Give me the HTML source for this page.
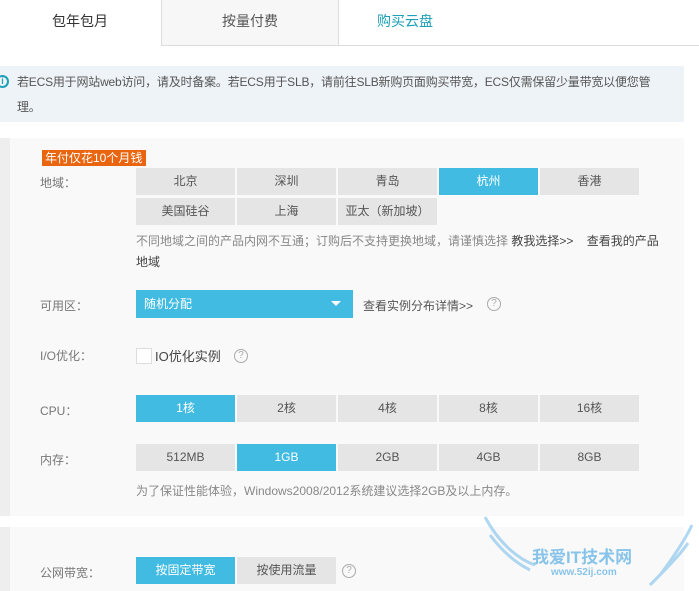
<!DOCTYPE html>
<html><head><meta charset="utf-8"><style>
*{margin:0;padding:0;box-sizing:border-box}
body{width:699px;height:591px;overflow:hidden;background:#fff;font-family:"Liberation Sans","Noto Sans CJK SC",sans-serif;font-size:12px;color:#555;position:relative}
.a{position:absolute}
.b{position:absolute;height:27px;width:99px;background:#e5e5e5;text-align:center;line-height:27px;color:#555;font-size:12px}
.s{background:#41bbe1;color:#fff}
.l{position:absolute;color:#777;font-size:12px}
.q{position:absolute;width:14px;height:14px;border:1px solid #aaa;border-radius:50%;font-size:10px;line-height:12px;text-align:center;color:#aaa}
</style></head><body>
<div class="a" style="left:0;top:0;width:160px;height:46px;line-height:42px;text-align:center;font-size:14px;color:#333">包年包月</div>
<div class="a" style="left:161px;top:0;width:178px;height:46px;background:#f7f7f7;border-left:1px solid #ddd;border-right:1px solid #ddd;border-bottom:1px solid #ddd;line-height:42px;text-align:center;font-size:14px;color:#555">按量付费</div>
<div class="a" style="left:339px;top:0;width:360px;height:46px;border-bottom:1px solid #ddd;"><div style="position:absolute;left:38px;top:0;line-height:42px;font-size:14px;color:#1fa0b8">购买云盘</div></div>

<div class="a" style="left:0;top:66px;width:684px;height:56px;background:#eef3f7"></div>
<div class="a" style="left:-4px;top:75px;width:13px;height:13px;border:2px solid #1fa0b8;border-radius:50%;color:#1fa0b8;font-size:9px;font-weight:bold;line-height:9px;text-align:center">i</div>
<div class="a" style="left:17px;top:70px;width:652px;line-height:25px;font-size:12px;color:#555;letter-spacing:-0.2px">若ECS用于网站web访问，请及时备案。若ECS用于SLB，请前往SLB新购页面购买带宽，ECS仅需保留少量带宽以便您管理。</div>

<div class="a" style="left:0;top:138px;width:10px;height:378px;background:#eeeeee"></div>
<div class="a" style="left:10px;top:138px;width:674px;height:378px;background:#f9f9f9"></div>
<div class="a" style="left:0;top:527px;width:10px;height:64px;background:#eeeeee"></div>
<div class="a" style="left:10px;top:527px;width:674px;height:64px;background:#f9f9f9"></div>

<div class="a" style="left:42px;top:150px;width:104px;height:16px;background:#e9650f;color:#fff;font-size:12px;line-height:16px;padding-left:3px">年付仅花10个月钱</div>
<div class="l" style="left:40px;top:174px">地域：</div>
<div class="b" style="left:136px;top:168px">北京</div>
<div class="b" style="left:237px;top:168px">深圳</div>
<div class="b" style="left:338px;top:168px">青岛</div>
<div class="b s" style="left:439px;top:168px">杭州</div>
<div class="b" style="left:540px;top:168px">香港</div>
<div class="b" style="left:136px;top:198px">美国硅谷</div>
<div class="b" style="left:237px;top:198px">上海</div>
<div class="b" style="left:338px;top:198px">亚太（新加坡）</div>
<div class="a" style="left:136px;top:231px;width:532px;line-height:21px;color:#888">不同地域之间的产品内网不互通；订购后不支持更换地域，请谨慎选择 <span style="color:#444">教我选择&gt;&gt;</span> &nbsp;&nbsp;&nbsp;<span style="color:#444">查看我的产品</span><br><span style="color:#444">地域</span></div>

<div class="l" style="left:40px;top:297px">可用区：</div>
<div class="a" style="left:136px;top:290px;width:217px;height:28px;background:#41bbe1;color:#fff;line-height:28px;padding-left:8px">随机分配</div>
<div class="a" style="left:331px;top:301px;border-left:5px solid transparent;border-right:5px solid transparent;border-top:5px solid #fff;width:0;height:0"></div>
<div class="a" style="left:363px;top:297px;color:#555">查看实例分布详情&gt;&gt;</div>
<div class="q" style="left:487px;top:297px">?</div>

<div class="l" style="left:40px;top:347px">I/O优化：</div>
<div class="a" style="left:136px;top:348px;width:16px;height:16px;border:1px solid #ddd;background:#fff"></div>
<div class="a" style="left:155px;top:346px;font-size:13px;color:#444">IO优化实例</div>
<div class="q" style="left:234px;top:349px">?</div>

<div class="l" style="left:40px;top:402px">CPU：</div>
<div class="b s" style="left:136px;top:395px">1核</div>
<div class="b" style="left:237px;top:395px">2核</div>
<div class="b" style="left:338px;top:395px">4核</div>
<div class="b" style="left:439px;top:395px">8核</div>
<div class="b" style="left:540px;top:395px">16核</div>

<div class="l" style="left:40px;top:451px">内存：</div>
<div class="b" style="left:136px;top:444px">512MB</div>
<div class="b s" style="left:237px;top:444px">1GB</div>
<div class="b" style="left:338px;top:444px">2GB</div>
<div class="b" style="left:439px;top:444px">4GB</div>
<div class="b" style="left:540px;top:444px">8GB</div>
<div class="a" style="left:136px;top:482px;color:#888">为了保证性能体验，Windows2008/2012系统建议选择2GB及以上内存。</div>

<div class="l" style="left:40px;top:564px">公网带宽：</div>
<div class="b s" style="left:136px;top:557px">按固定带宽</div>
<div class="b" style="left:237px;top:557px">按使用流量</div>
<div class="q" style="left:342px;top:564px">?</div>

<div class="a" style="left:532px;top:543px;font-size:17px;font-weight:bold;color:#6cb8e6;opacity:.8">我爱IT技术网</div>
<div class="a" style="left:551px;top:567px;font-size:10px;font-weight:bold;color:#6cb8e6;opacity:.8">www.52ij.com</div>
<svg class="a" style="left:480px;top:515px" width="215" height="76"><path d="M5 2 C20 30 40 45 55 50 M10 20 C25 40 40 50 50 55 M180 60 C195 40 205 25 212 10 M170 70 C185 55 200 40 208 28" stroke="#8ec8ee" stroke-width="3" fill="none" opacity=".7"/></svg>
</body></html>
